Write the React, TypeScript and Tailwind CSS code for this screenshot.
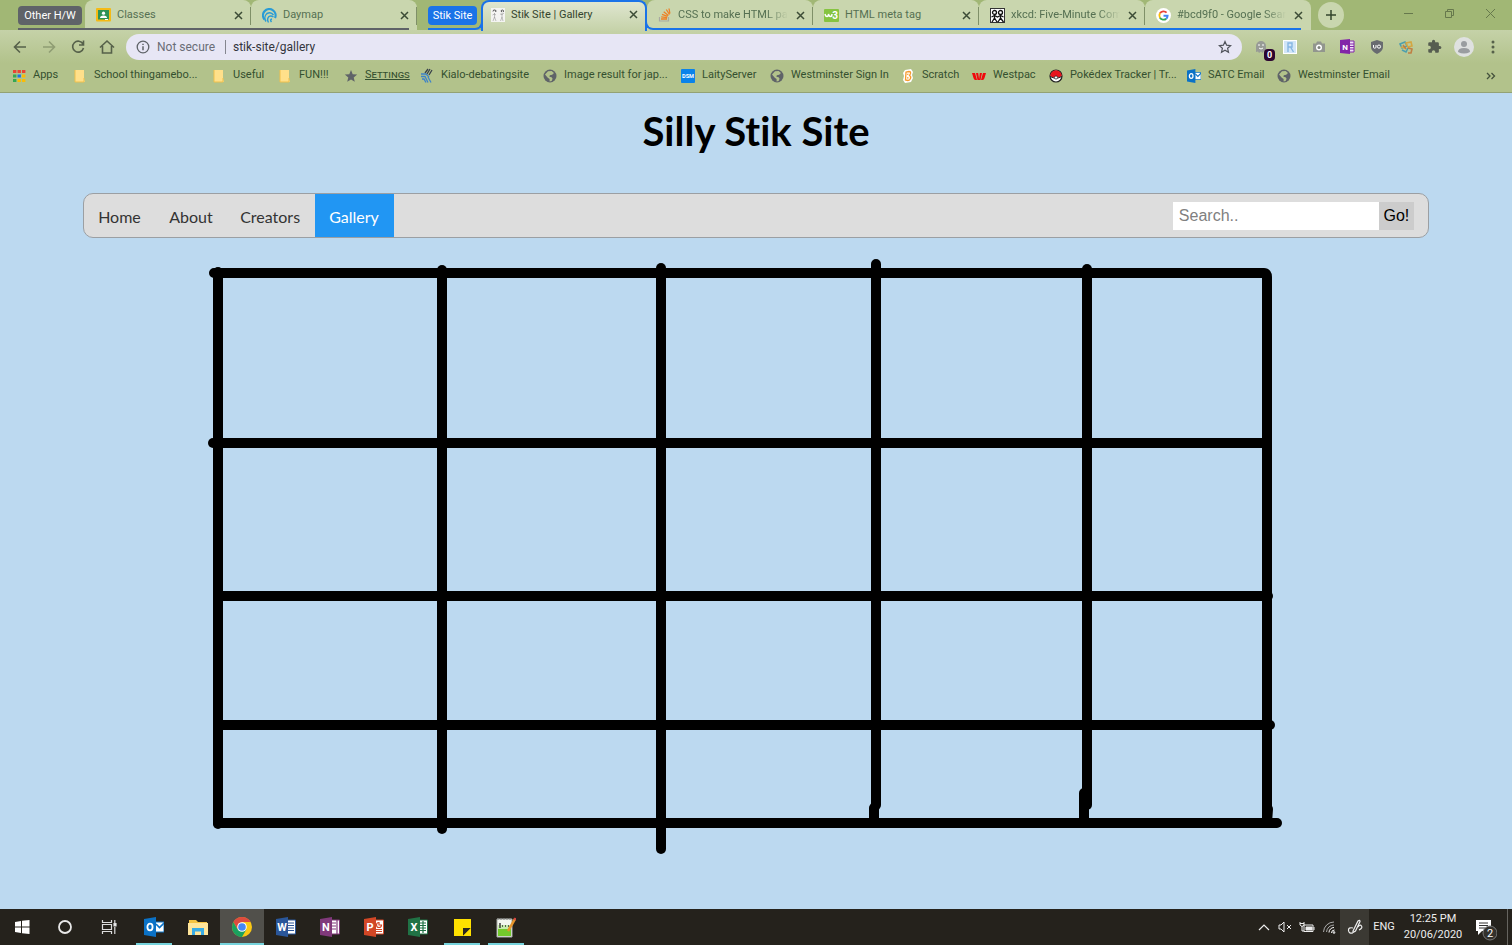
import React from "react";
import { clsx } from "clsx";

type IconProps = { className?: string };
const s14 = "h-3.5 w-3.5 shrink-0";

function Globe() {
  return (
    <svg viewBox="0 0 14 14" className={s14}>
      <circle cx="7" cy="7" r="6.5" fill="#5f6368" />
      <path d="M5 2.2 8.6 2l2.4 2-1.8 1.8-2.4.4-.4 1.6 2.2.4 1 1.6-1 2.2-2 .6V10L4.8 8.8 2 5.6z" fill="#b2c28b" />
    </svg>
  );
}

function Folder() {
  return (
    <svg viewBox="0 0 14 14" className={s14}>
      <path d="M2 1h9v9l1 3H2z" fill="#ffe08a" />
      <path d="M2 1v12h9M11 9v4" fill="none" stroke="#efc04d" />
    </svg>
  );
}

function AppsIcon() {
  const colors = ["#ea4335", "#ea4335", "#ea4335", "#34a853", "#1a73e8", "#fbbc05", "#34a853", "#fbbc05", "#fbbc05"];
  return (
    <svg viewBox="0 0 14 14" className={s14}>
      {colors.map((c, i) => (
        <rect key={i} x={1 + (i % 3) * 4.5} y={1 + Math.floor(i / 3) * 4.5} width="3.4" height="3" fill={c} />
      ))}
    </svg>
  );
}

function StarSolid() {
  return (
    <svg viewBox="0 0 14 14" className={s14}>
      <path d="M7 1l1.7 4.2 4.5.3-3.5 2.9 1.1 4.4L7 10.400l-3.800 2.400 1.100-4.400L.8 5.500l4.500-.3z" fill="#5f6368" />
    </svg>
  );
}

function Kialo() {
  return (
    <svg viewBox="0 0 14 16" className="h-4 w-3.5 shrink-0" fill="none" strokeWidth="1.3">
      <path d="M5 5 8 1M7 6l3-5M9 7l3-5" stroke="#38414a" />
      <path d="M1 6h5l3 3M1 8.500h4l3 6M2 11h2l2 3.500M8 9l3 5.500" stroke="#3d83c9" />
    </svg>
  );
}

function Dsm() {
  return (
    <svg viewBox="0 0 15 15" className={s14}>
      <rect width="15" height="15" rx="1" fill="#0a83ea" />
      <text x="7.5" y="9.700" fontSize="6" fontWeight="700" textAnchor="middle" fill="#fff">DSM</text>
    </svg>
  );
}

function ScratchIcon() {
  return (
    <svg viewBox="0 0 14 14" className={s14}>
      <path d="M4 1 10 0l2 3-1 3 1 3-2 4-6 1-2-3 1-4-1-3z" fill="#fff" />
      <path d="M5 3.200 8 2.500q2 0 1.500 2L8.500 6.500q1.800 1 1 3T7 11.500L4.500 11zM6 5.500 7.500 5M6 8.800h1.500" stroke="#f79a2d" strokeWidth="1.300" fill="none" />
    </svg>
  );
}

function WestpacIcon() {
  return (
    <svg viewBox="0 0 14 14" className={s14} fill="#f0080c">
      <path d="M0 4h3l2 7H3.500Q2 11 1.500 9zM4 4h2.200l1 7H5.500zM7.800 4H10l-1.500 7H7zM11 4h3l-1.500 5Q12 11 10.500 11H9z" />
    </svg>
  );
}

function Pokeball() {
  return (
    <svg viewBox="0 0 14 14" className={s14}>
      <circle cx="7" cy="7" r="6" fill="#fff" stroke="#222" strokeWidth="1.200" />
      <path d="M1.200 7.500a5.800 6.300 0 0 1 11.600 0L7 9z" fill="#e8141c" />
      <path d="M1 7.500 5 9h4l4-1.500" stroke="#222" fill="none" />
      <circle cx="7" cy="8.500" r="1.600" fill="#fff" stroke="#222" strokeWidth=".7" />
    </svg>
  );
}

function Outlook({ className }: IconProps) {
  return (
    <svg viewBox="0 0 20 20" className={clsx("shrink-0", className)}>
      <path d="M11 5h9v10h-9z" fill="#fff" stroke="#0b72c6" />
      <path d="m12 7 3.500 3.500L20 6" stroke="#0b72c6" strokeWidth="1.600" fill="none" />
      <path d="M0 2 12 0v20L0 18z" fill="#0b72c6" />
      <ellipse cx="6" cy="10" rx="2.600" ry="3.300" fill="none" stroke="#fff" strokeWidth="1.800" />
    </svg>
  );
}

function Classroom() {
  return (
    <svg viewBox="0 0 15 14" className="h-3.5 w-[15px] shrink-0">
      <rect width="15" height="13.500" rx="1" fill="#f5ba15" />
      <rect x="2" y="2" width="11" height="9.500" fill="#2d9254" />
      <circle cx="7.500" cy="5.200" r="1.600" fill="#fff" />
      <path d="M4 10q0-2.500 3.500-2.500T11 10z" fill="#fff" />
      <path d="M9 11.500h3" stroke="#fff" />
    </svg>
  );
}

function Daymap() {
  return (
    <svg viewBox="0 0 15 15" className="h-[15px] w-[15px] shrink-0" fill="none" stroke="#299bd6">
      <path d="M13 10A6.300 6.300 0 1 0 2.500 11.500" strokeWidth="2.200" />
      <path d="M4 13.500A6 6 0 0 1 5 5.500q4-2 6.500 1.500" strokeWidth="1.500" />
      <path d="M6.500 14.500Q4.500 11 7 8.500q2-1.300 4.500.5" strokeWidth="1.400" />
      <path d="M9.500 14Q7.500 11.500 10 11" strokeWidth="1.400" />
    </svg>
  );
}

function StikIcon() {
  return (
    <svg viewBox="0 0 14 14" className={s14}>
      <rect width="14" height="14" fill="#f4f4f2" />
      <g fill="none" stroke="#444" strokeWidth=".9">
        <path d="M2 3.500q0-2 2-1.500t.500 2M10.500 4q-1-2 .8-2t1 2" />
        <path d="M3.500 5V9L2 13M3.500 9 5 13M1.500 7l2-1 1.500 1M11 4.500V9l-1.500 4M11 9l1 4M9 6l2 .500L13 5" strokeOpacity=".35" />
      </g>
    </svg>
  );
}

function StackOverflow() {
  return (
    <svg viewBox="0 0 14 14" className={s14} fill="none">
      <path d="M1.500 9v4h9V9" stroke="#a9aaa2" strokeWidth="1.200" />
      <path d="M3 11h6M3.200 8.800l6 .8M4 6.300l5.600 2M5.700 3.700l4.700 3.800M8.300 1.500 11.500 6.500M11 .5l.9 5" stroke="#ee8125" strokeWidth="1.300" />
    </svg>
  );
}

function W3() {
  return (
    <svg viewBox="0 0 15 13" className="h-[13px] w-[15px] shrink-0">
      <rect width="15" height="13" rx="1" fill="#86c440" />
      <path d="M1 5q.5 2.500 2 2.500T4.500 5q.5 2.500 2 2.500T8 5" fill="none" stroke="#fff" strokeWidth="1.400" />
      <text x="11.200" y="10.200" fontSize="10" fontWeight="700" textAnchor="middle" fill="#fff">3</text>
    </svg>
  );
}

function Xkcd() {
  return (
    <svg viewBox="0 0 15 15" className="h-[15px] w-[15px] shrink-0">
      <rect width="15" height="15" fill="#fff" />
      <rect x=".5" y=".5" width="14" height="14" fill="none" stroke="#333" />
      <g fill="none" stroke="#111" strokeWidth="1.300">
        <circle cx="4.500" cy="4.500" r="2" />
        <circle cx="10.500" cy="4.500" r="2" />
        <path d="M4.500 7v3L2 14M4.500 10 7 14M10.500 7v3L8 14M10.500 10l3 4M1.500 9l3-1.500L7.500 9l3-1.500L13.500 9" />
      </g>
    </svg>
  );
}

function GoogleG() {
  return (
    <svg viewBox="0 0 16 16" className="h-[15px] w-[15px] shrink-0" fill="none" strokeWidth="2">
      <circle cx="8" cy="8" r="8" fill="#fff" />
      <path d="M11.300 5A4.500 4.500 0 0 0 4.200 5.700" stroke="#ea4335" />
      <path d="M4.200 5.700a4.500 4.500 0 0 0 0 4.600" stroke="#fbbc05" />
      <path d="M4.200 10.300a4.500 4.500 0 0 0 6.700 1.100" stroke="#34a853" />
      <path d="M10.900 11.400A4.500 4.500 0 0 0 12.400 8.200H8" stroke="#4285f4" />
    </svg>
  );
}

function Close() {
  return (
    <svg viewBox="0 0 9 9" className="h-[9px] w-[9px]">
      <path d="m1 1 7 7M8 1 1 8" stroke="#3c4c36" strokeWidth="1.500" />
    </svg>
  );
}

function Tab({ icon, title, divider, active, fade }: { icon: React.ReactNode; title: string; divider?: boolean; active?: boolean; fade?: boolean }) {
  return (
    <div
      className={clsx(
        "relative flex w-[166px] items-center gap-1.5 text-[11px]",
        active
          ? "z-10 h-[31px] rounded-t-lg border-2 border-b-0 border-[#1a73e8] bg-linear-to-b from-[#dfe6d0] to-[#c5d2a8] pb-1 pl-2 pr-1.5 text-[#34452e]"
          : "h-[30px] rounded-t-lg bg-[#c9d6ae] pl-[11px] pr-[7px] text-[#557052]",
      )}
    >
      {icon}
      <span className={clsx("min-w-0 flex-1 whitespace-nowrap pt-px", fade && "[mask-image:linear-gradient(to_right,black_80%,transparent)]")}>{title}</span>
      <button aria-label={"Close " + title} className="grid h-4 w-3 shrink-0 place-items-center">
        <Close />
      </button>
      {divider && <span className="absolute right-0 top-[7px] h-[18px] w-px bg-[#7f9068]" />}
    </div>
  );
}

function TabStrip() {
  return (
    <div className="flex h-[30px] items-start bg-[#a1b775] pl-[18px]">
      <div className="relative flex h-[30px] items-center">
        <span className="mr-[3px] h-[19px] w-16 rounded bg-[#5f6368] text-center text-[11px] leading-[19px] text-white">Other H/W</span>
        <Tab icon={<Classroom />} title="Classes" divider />
        <Tab icon={<Daymap />} title="Daymap" divider />
        <span className="absolute bottom-0 left-0 right-2 h-0.5 bg-[#5f6368]" />
      </div>
      <div className="relative ml-[11px] flex h-[30px] items-center pr-1.5">
        <span className="h-[19px] w-[49px] rounded bg-[#1a73e8] text-center text-[11px] leading-[19px] text-white">Stik Site</span>
        <span className="absolute inset-x-0 bottom-0 h-2.5 rounded-br-lg border-b-2 border-r-2 border-[#1a73e8]" />
      </div>
      <div className="-ml-0.5">
        <Tab icon={<StikIcon />} title="Stik Site | Gallery" active />
      </div>
      <div className="relative flex">
        <Tab icon={<StackOverflow />} title="CSS to make HTML pa" divider fade />
        <Tab icon={<W3 />} title="HTML meta tag" divider />
        <Tab icon={<Xkcd />} title="xkcd: Five-Minute Com" divider fade />
        <Tab icon={<GoogleG />} title="#bcd9f0 - Google Sear" fade />
        <span className="absolute -left-0.5 bottom-0 right-2.5 h-2.5 rounded-bl-lg border-b-2 border-l-2 border-[#1a73e8]" />
      </div>
      <button aria-label="New tab" className="ml-[7px] mt-0.5 grid h-[26px] w-[26px] place-items-center rounded-full bg-[#c9d6ae]">
        <svg viewBox="0 0 12 12" className="h-3 w-3">
          <path d="M6 1v10M1 6h10" stroke="#34452e" strokeWidth="1.500" />
        </svg>
      </button>
      <div className="ml-auto flex h-[26px] items-center gap-[30px] pr-4 text-[#66784c]">
        <button aria-label="Minimize">
          <svg viewBox="0 0 11 11" className="h-[11px] w-[11px]"><path d="M1 5.500h9" stroke="currentColor" /></svg>
        </button>
        <button aria-label="Restore">
          <svg viewBox="0 0 11 11" className="h-[11px] w-[11px]"><path d="M1.500 3.500h6v6h-6zM3.500 3V1.500h6v6H8" stroke="currentColor" fill="none" /></svg>
        </button>
        <button aria-label="Close window">
          <svg viewBox="0 0 11 11" className="h-[11px] w-[11px]"><path d="m1 1 9 9M10 1l-9 9" stroke="currentColor" /></svg>
        </button>
      </div>
    </div>
  );
}

function NavIcon({ label, d, faded }: { label: string; d: string; faded?: boolean }) {
  return (
    <button aria-label={label} className={clsx("grid h-5 w-[29px] place-items-center", faded ? "text-[#8f9d73]" : "text-[#56614a]")}>
      <svg viewBox="0 0 16 16" className="h-4 w-4">
        <path d={d} fill="none" stroke="currentColor" strokeWidth="1.600" />
      </svg>
    </button>
  );
}

function Extensions() {
  return (
    <div className="flex items-center">
      <button aria-label="Ghostery" className="relative grid h-6 w-[29px] place-items-center">
        <svg viewBox="0 0 14 14" className={s14}>
          <path d="M2 12V6a5 5 0 0 1 10 0v6l-2-1-1.500 2L7 11.500 5 13l-1-1.500z" fill="#989b96" />
          <path d="M5 4v2M9 4v2M5 8q2 2 4 0" stroke="#fff" fill="none" />
        </svg>
        <span className="absolute -bottom-0.5 right-0 h-3 w-[11px] rounded-sm bg-[#2c0530] text-center text-[9px] font-bold leading-3 text-white">0</span>
      </button>
      <button aria-label="Reader" className="grid h-6 w-[29px] place-items-center">
        <svg viewBox="0 0 14 14" className={s14}>
          <rect width="14" height="14" fill="#fff" />
          <rect x="1" y="1" width="12" height="12" fill="#d2e6f8" />
          <path d="M5 12V3h4v4H5M7.500 7l3 5" stroke="#85b6e3" strokeWidth="1.400" fill="none" />
        </svg>
      </button>
      <button aria-label="Screenshot" className="grid h-6 w-[29px] place-items-center">
        <svg viewBox="0 0 14 14" className={s14}>
          <path d="M1 3.500h3L5 1.500h4l1 2h3V12H1z" fill="#92968e" />
          <circle cx="7" cy="7.500" r="3" fill="#fff" />
          <circle cx="7" cy="7.500" r="1.500" fill="#7f837c" />
        </svg>
      </button>
      <button aria-label="OneNote clipper" className="grid h-6 w-[29px] place-items-center">
        <svg viewBox="0 0 15 15" className="h-[15px] w-[15px]">
          <path d="M9 2h5v11H9z" fill="#efe0f6" stroke="#8226a8" />
          <path d="M10 5h4M10 7.500h4M10 10h4" stroke="#8226a8" />
          <path d="M0 1 10 0v15L0 14z" fill="#8226a8" />
          <text x="5" y="10.500" fontSize="8" fontWeight="700" textAnchor="middle" fill="#fff">N</text>
        </svg>
      </button>
      <button aria-label="uBlock" className="grid h-6 w-[29px] place-items-center">
        <svg viewBox="0 0 14 14" className={s14}>
          <path d="M7 0 13 2v5q0 4-6 7-6-3-6-7V2z" fill="#686b70" />
          <path d="M3.500 5v2.200q0 1 1.200 1T6 7.200V5" stroke="#fff" fill="none" />
          <circle cx="9" cy="6.600" r="1.600" stroke="#fff" fill="none" />
        </svg>
      </button>
      <button aria-label="Translate helper" className="grid h-6 w-[29px] place-items-center">
        <svg viewBox="0 0 14 14" className={s14} fill="none" strokeWidth="1.600">
          <path d="M1 4 6 2l2 4-5 2zM3 10l4 2 2-4" stroke="#4d9fae" />
          <path d="M7 3l5-1 1 4-4 1zM2 7l4 1" stroke="#d4a642" />
          <path d="M9 8l4 1-1 4H9M4 5l3 4" stroke="#c07f43" />
        </svg>
      </button>
      <button aria-label="Extensions" className="grid h-6 w-[29px] place-items-center">
        <svg viewBox="0 0 24 24" className="h-[15px] w-[15px]" fill="#565d50">
          <path d="M20.500 11H19V7a2 2 0 0 0-2-2h-4V3.500a2.500 2.500 0 0 0-5 0V5H4a2 2 0 0 0-2 2v3.800h1.500a2.700 2.700 0 0 1 0 5.400H2V20a2 2 0 0 0 2 2h3.800v-1.500a2.700 2.700 0 0 1 5.400 0V22H17a2 2 0 0 0 2-2v-4h1.500a2.500 2.500 0 0 0 0-5z" />
        </svg>
      </button>
      <button aria-label="Profile" className="grid h-6 w-[29px] place-items-center">
        <svg viewBox="0 0 20 20" className="h-5 w-5">
          <circle cx="10" cy="10" r="10" fill="#dfe1e0" />
          <circle cx="10" cy="7" r="3" fill="#9a9da0" />
          <path d="M4 15q0-4 6-4t6 4q-6 3-12 0" fill="#9a9da0" />
        </svg>
      </button>
      <button aria-label="Menu" className="grid h-6 w-[29px] place-items-center">
        <svg viewBox="0 0 4 14" className="h-3.5 w-1" fill="#56614a">
          <circle cx="2" cy="2" r="1.500" /><circle cx="2" cy="7" r="1.500" /><circle cx="2" cy="12" r="1.500" />
        </svg>
      </button>
    </div>
  );
}

function Toolbar() {
  return (
    <div className="flex h-[33px] items-center bg-linear-to-b from-[#c5d2a8] to-[#b2c28b] px-[5px]">
      <NavIcon label="Back" d="M14 8H3M8 2.500 2.500 8 8 13.500" />
      <NavIcon label="Forward" faded d="M2 8h11M8 2.500 13.500 8 8 13.500" />
      <NavIcon label="Reload" d="M13 5A5.500 5.500 0 1 0 13.500 9M13.500 1.500V6H9" />
      <NavIcon label="Home" d="M1 8.500 8 2l7 6.500M3.500 7v7h9V7" />
      <div className="ml-[5px] flex h-[26px] flex-1 items-center rounded-full bg-[#e7e6f5] px-2.5 text-xs">
        <svg viewBox="0 0 14 14" className={s14} fill="none" stroke="#5f6368" strokeWidth="1.300">
          <circle cx="7" cy="7" r="5.800" />
          <path d="M7 6.200v4M7 3.700v1.400" strokeWidth="1.500" />
        </svg>
        <label htmlFor="address" className="ml-[7px] w-[61px] whitespace-nowrap text-[#6a6d77]">Not secure</label>
        <span className="mx-[7px] h-3.5 w-px bg-[#85868f]" />
        <input id="address" defaultValue="stik-site/gallery" className="min-w-0 flex-1 bg-transparent text-[#33353c] outline-none" />
        <button aria-label="Bookmark this page">
          <svg viewBox="0 0 14 14" className={s14}>
            <path d="m7 1.500 1.600 3.700 4 .4-3 2.700.9 4L7 10.200l-3.500 2.100.9-4-3-2.700 4-.4z" fill="none" stroke="#50535b" strokeWidth="1.200" />
          </svg>
        </button>
      </div>
      <div className="ml-1"><Extensions /></div>
    </div>
  );
}

const bookmarks: { label: string; icon: React.ReactNode; width: string; scribble?: boolean }[] = [
  { label: "Apps", icon: <AppsIcon />, width: "w-[61px]" },
  { label: "School thingamebo...", icon: <Folder />, width: "w-[139px]" },
  { label: "Useful", icon: <Folder />, width: "w-[66px]" },
  { label: "FUN!!!", icon: <Folder />, width: "w-[66px]" },
  { label: "Settings", icon: <StarSolid />, width: "w-[76px]", scribble: true },
  { label: "Kialo-debatingsite", icon: <Kialo />, width: "w-[123px]" },
  { label: "Image result for jap...", icon: <Globe />, width: "w-[138px]" },
  { label: "LaityServer", icon: <Dsm />, width: "w-[89px]" },
  { label: "Westminster Sign In", icon: <Globe />, width: "w-[131px]" },
  { label: "Scratch", icon: <ScratchIcon />, width: "w-[71px]" },
  { label: "Westpac", icon: <WestpacIcon />, width: "w-[77px]" },
  { label: "Pokédex Tracker | Tr...", icon: <Pokeball />, width: "w-[138px]" },
  { label: "SATC Email", icon: <Outlook className="h-3.5 w-3.5" />, width: "w-[90px]" },
  { label: "Westminster Email", icon: <Globe />, width: "w-[120px]" },
];

function BookmarksBar() {
  return (
    <div className="flex h-[30px] items-center border-b border-[#93a274] bg-[#b2c28b] pb-1 pl-3 text-[11px] text-[#34502f]">
      {bookmarks.map((b) => (
        <a key={b.label} href="#" className={clsx("flex shrink-0 items-center gap-[7px] whitespace-nowrap", b.width)}>
          {b.icon}
          <span className={clsx(b.scribble && "underline line-through [font-variant:small-caps]")}>{b.label}</span>
        </a>
      ))}
      <button aria-label="More bookmarks" className="ml-auto mr-4">
        <svg viewBox="0 0 10 8" className="h-2 w-2.5" fill="none" stroke="#43513b" strokeWidth="1.300">
          <path d="m1 1 3 3-3 3M5.500 1l3 3-3 3" />
        </svg>
      </button>
    </div>
  );
}

const strokes = [
  "M214 273H1264Q1267 273 1267 277V820",
  "M213 443H1266",
  "M218 596H1268",
  "M218 725H1270",
  "M218 823H1277",
  "M218 272V824",
  "M442 270V829",
  "M661 268V849",
  "M876 264V805L874 808V822",
  "M1087 269V805",
  "M1084 793V818L1085 823",
  "M1267 770V809L1268 809L1267 823",
];

function Gallery() {
  return (
    <svg viewBox="0 238 1512 622" className="w-full" role="img" aria-label="Hand drawn gallery grid">
      <g fill="none" stroke="#000" strokeWidth="10" strokeLinecap="round" strokeLinejoin="round">
        {strokes.map((d) => <path key={d} d={d} />)}
      </g>
    </svg>
  );
}

function SitePage() {
  return (
    <main className="flex-1 bg-[#bcd9f0]">
      <h1 className="pb-6 text-center font-[Lato,sans-serif] text-[40px] font-bold leading-[76px] text-black [font-variant-ligatures:none]">Silly Stik Site</h1>
      <nav className="mx-[5.5%] flex h-[45px] items-stretch overflow-hidden rounded-[10px] border border-[#9b9fa3] bg-[#ddd] font-[Lato,sans-serif] text-base text-[#333]">
        <a href="#" className="w-[71px] pl-3.5 leading-[46px]">Home</a>
        <a href="#" className="w-[71px] pl-3.5 leading-[46px]">About</a>
        <a href="#" className="w-[89px] pl-3.5 leading-[46px]">Creators</a>
        <a href="#" className="w-[79px] bg-[#2196f3] pl-3.5 leading-[46px] text-white">Gallery</a>
        <form className="ml-auto mr-3.5 flex items-center font-['Liberation_Sans',sans-serif]">
          <input aria-label="Search" placeholder="Search.." className="h-7 w-[206px] bg-white px-1.5 placeholder:text-[#808080]" />
          <button type="button" className="h-7 w-[35px] bg-[#ccc] text-center text-black">Go!</button>
        </form>
      </nav>
      <Gallery />
    </main>
  );
}

function OfficeIcon({ letter, color, paper }: { letter: string; color: string; paper: string }) {
  return (
    <svg viewBox="0 0 20 20" className="h-5 w-5">
      <path d="M10 3h9.500v14H10z" fill="#fff" stroke={color} />
      <path d={paper} stroke={color} strokeWidth="1.200" fill="none" />
      <path d="M0 2 12 0v20L0 18z" fill={color} />
      <text x="6" y="14" fontSize="11" fontWeight="700" textAnchor="middle" fill="#fff">{letter}</text>
    </svg>
  );
}

function Task({ label, children, open, current }: { label: string; children: React.ReactNode; open?: boolean; current?: boolean }) {
  return (
    <button aria-label={label} className={clsx("relative grid h-9 w-11 place-items-center", current && "bg-[#51504b]")}>
      {children}
      {(open || current) && <span className={clsx("absolute bottom-0 h-0.5 bg-[#76d3dc]", current ? "inset-x-0" : "inset-x-1")} />}
    </button>
  );
}

function Taskbar() {
  const lines = "M12 6h6M12 8.500h6M12 11h6M12 13.500h6";
  return (
    <footer className="flex h-9 items-center bg-[#25221c] text-white">
      <Task label="Start">
        <svg viewBox="0 0 16 16" className="h-4 w-4" fill="#fff"><path d="M1 3 7 2v5.500H1zM8 1.800 15.500 1v6.500H8zM1 8.500h6V14l-6-1zM8 8.500h7.500V15L8 14.200z" /></svg>
      </Task>
      <Task label="Cortana">
        <svg viewBox="0 0 16 16" className="h-4 w-4"><circle cx="7" cy="8" r="6" fill="none" stroke="#e8e8e8" strokeWidth="1.800" /></svg>
      </Task>
      <Task label="Task view">
        <svg viewBox="0 0 18 16" className="h-4 w-[18px]" fill="none" stroke="#ddd" strokeWidth="1.200"><path d="M1.500 1v2.500h9V1M1.500 5.500h9v5h-9zM1.500 15v-2.500h9V15M13.800 1v3M13.800 8v7" /><path d="M13 4.500h2v2.500h-2z" fill="#fff" /></svg>
      </Task>
      <Task label="Outlook" open><Outlook className="h-5 w-5" /></Task>
      <Task label="File Explorer">
        <svg viewBox="0 0 20 17" className="h-[17px] w-5"><path d="M1 1h7l2 2h9v13H1z" fill="#f5c342" /><path d="M0 4h20v12H0z" fill="#ffe59a" /><path d="M4 16V9h12v7h-3v-3.500H7V16z" fill="#38abe5" /></svg>
      </Task>
      <Task label="Chrome" current>
        <svg viewBox="0 0 20 20" className="h-5 w-5">
          <circle cx="10" cy="10" r="10" fill="#fbc814" />
          <path d="M1.340 5A10 10 0 0 1 18.660 5H10L5.670 12.500z" fill="#dd4b3e" />
          <path d="M1.340 5A10 10 0 0 0 10 20l4.330-7.500H5.670z" fill="#1aa15f" />
          <circle cx="10" cy="10" r="4.800" fill="#fff" />
          <circle cx="10" cy="10" r="3.800" fill="#4687f4" />
        </svg>
      </Task>
      <Task label="Word"><OfficeIcon letter="W" color="#2a5699" paper={lines} /></Task>
      <Task label="OneNote"><OfficeIcon letter="N" color="#80397b" paper="M12 6h4M12 9h4M12 12h4M17 3v14" /></Task>
      <Task label="PowerPoint"><OfficeIcon letter="P" color="#d24726" paper="M15 5.500a2.500 2.500 0 1 0 2.500 2.500H15zM12 12.500h6M12 14.500h6" /></Task>
      <Task label="Excel"><OfficeIcon letter="X" color="#207245" paper="M12 6h6M12 8.500h6M12 11h6M12 13.500h6M15 4v12" /></Task>
      <Task label="Sticky Notes" open>
        <svg viewBox="0 0 17 17" className="h-[17px] w-[17px]"><path d="M0 0h17v17H0z" fill="#ffe100" /><path d="M9 17V9h8z" fill="#2b2820" /><path d="m9 17 8-8v8z" fill="#ffe100" /></svg>
      </Task>
      <Task label="Notepad++" open>
        <svg viewBox="0 0 20 21" className="h-[21px] w-5">
          <path d="M1 2h15v18H1z" fill="#f2f5ef" stroke="#a7aba5" />
          <path d="M2 11h13v8H2z" fill="#74ca2c" /><path d="M2 8h13v4H2z" fill="#c5ebab" />
          <path d="M2 1v2M5 1v2M8 1v2M11 1v2M14 1v2" stroke="#888" />
          <path d="M4 6v5M6 9h1M9 9h1M12 9h1" stroke="#333" strokeWidth="1.400" />
          <path d="m12 14 7-12" stroke="#e6952c" strokeWidth="2.500" /><path d="m18.500 3 1-2" stroke="#d44" strokeWidth="2" />
        </svg>
      </Task>
      <div className="ml-auto flex h-9 items-center text-[#eee]">
        <button aria-label="Show hidden icons" className="grid w-5 place-items-center">
          <svg viewBox="0 0 12 8" className="h-2 w-3"><path d="m1 7 5-5 5 5" fill="none" stroke="currentColor" strokeWidth="1.200" /></svg>
        </button>
        <button aria-label="Volume muted" className="grid w-[22px] place-items-center">
          <svg viewBox="0 0 14 12" className="h-3 w-3.5" fill="none" stroke="currentColor"><path d="M1 4h2l3-3v10L3 8H1zM9 4l4 4M13 4 9 8" /></svg>
        </button>
        <button aria-label="Battery" className="grid w-[22px] place-items-center">
          <svg viewBox="0 0 16 12" className="h-3 w-4" fill="none" stroke="currentColor"><path d="M5 4h9v6.500H5zM15 6v3M1 1v3q2 3 4 0V1M1 2.500h4M3 5v5h2" /><path d="M7 6h6v3H7z" fill="currentColor" /></svg>
        </button>
        <button aria-label="Wi-Fi" className="grid w-[22px] place-items-center">
          <svg viewBox="0 0 14 14" className={s14} fill="none" stroke="#aaa"><path d="M1.500 12A10.500 10.500 0 0 1 12 2M4.500 12A7.500 7.500 0 0 1 12 5" /><path d="M7 12.500a5 5 0 0 1 5-5M9.500 13a3 3 0 0 1 3-3" stroke="#fff" /><circle cx="12" cy="12.500" r="1" fill="#fff" /></svg>
        </button>
        <button aria-label="Windows Ink" className="grid h-9 w-[29px] place-items-center bg-[#3b3933]">
          <svg viewBox="0 0 16 16" className="h-4 w-4" fill="none" stroke="#eee" strokeWidth="1.200"><path d="M6 9Q1 8 1.500 11.500T6 14M6 12 11 2q2-1.500 2 .5L8.500 12 6 13.500zM11 8q2-3 3.500-1T12 11" /></svg>
        </button>
        <span className="w-[30px] text-center text-[11px]">ENG</span>
        <span className="w-[68px] text-center text-[11px] leading-4">12:25 PM<br />20/06/2020</span>
        <button aria-label="2 notifications" className="ml-1 h-9 w-[34px]">
          <svg viewBox="0 0 22 23" className="ml-1 mt-1 h-[23px] w-[22px]">
            <path d="M1 2h15v11H7l-4 4v-4H1z" fill="#fff" /><path d="M4 5h9M4 7.500h9M4 10h6" stroke="#333" />
            <circle cx="15" cy="15" r="7" fill="#33312c" stroke="#777" />
            <text x="15" y="19" textAnchor="middle" fontSize="11" fill="#fff">2</text>
          </svg>
        </button>
        <span className="ml-0.5 h-9 w-[5px] border-l border-[#66645f]" />
      </div>
    </footer>
  );
}

export default function App() {
  return (
    <div className="flex min-h-screen flex-col bg-[#bcd9f0] font-[Roboto,'Open_Sans',sans-serif]">
      <header>
        <TabStrip />
        <Toolbar />
        <BookmarksBar />
      </header>
      <SitePage />
      <Taskbar />
    </div>
  );
}
